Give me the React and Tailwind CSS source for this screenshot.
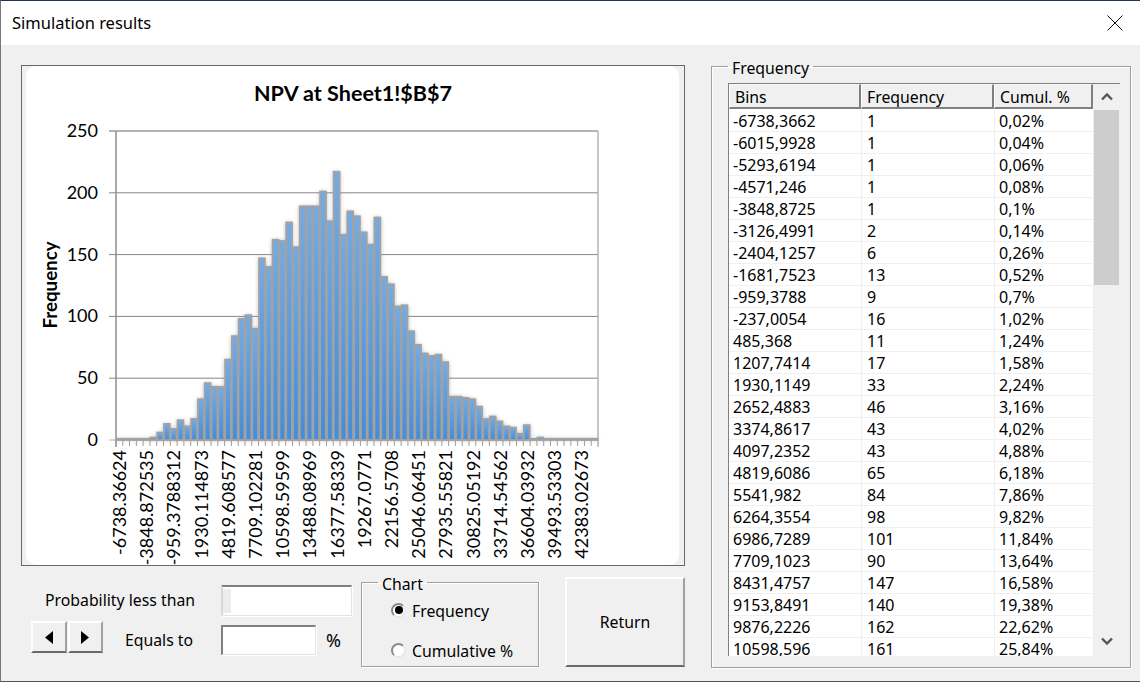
const freq = [1,1,1,1,1,2,6,13,9,16,11,17,33,46,43,43,65,84,98,101,90,147,140,162,161,176,156,189,189,189,201,177,217,166,185,181,168,158,180,132,126,108,109,88,77,70,68,69,63,35,35,34,33,27,17,19,15,11,10,5,12,1,2,1,1,1,1,1,1,1,1];
const rows = [
  ["-6738,3662","1","0,02%"],["-6015,9928","1","0,04%"],["-5293,6194","1","0,06%"],["-4571,246","1","0,08%"],
  ["-3848,8725","1","0,1%"],["-3126,4991","2","0,14%"],["-2404,1257","6","0,26%"],["-1681,7523","13","0,52%"],
  ["-959,3788","9","0,7%"],["-237,0054","16","1,02%"],["485,368","11","1,24%"],["1207,7414","17","1,58%"],
  ["1930,1149","33","2,24%"],["2652,4883","46","3,16%"],["3374,8617","43","4,02%"],["4097,2352","43","4,88%"],
  ["4819,6086","65","6,18%"],["5541,982","84","7,86%"],["6264,3554","98","9,82%"],["6986,7289","101","11,84%"],
  ["7709,1023","90","13,64%"],["8431,4757","147","16,58%"],["9153,8491","140","19,38%"],["9876,2226","162","22,62%"],
  ["10598,596","161","25,84%"],
];
const xLabels = ["-6738.36624","-3848.872535","-959.3788312","1930.114873","4819.608577","7709.102281","10598.59599","13488.08969","16377.58339","19267.0771","22156.5708","25046.06451","27935.55821","30825.05192","33714.54562","36604.03932","39493.53303","42383.02673"];
const PX = 90, PY = 65, PW = 482, PH = 309;
const step = PW / freq.length;

function Chart() {
  const yOf = (v) => PY + PH - (v / 250) * PH;
  return (
    <svg width="653" height="499" className="block">
      <defs>
        <linearGradient id="bar" x1="0" y1="0" x2="0" y2="1">
          <stop offset="0" stopColor="#72ace6" />
          <stop offset="1" stopColor="#468cd6" />
        </linearGradient>
        <filter id="soft" x="-5%" y="-5%" width="110%" height="110%">
          <feGaussianBlur stdDeviation="2.2" />
        </filter>
      </defs>
      <text x="327" y="35" textAnchor="middle" className="fill-black text-[21px] font-bold font-['Lato']" textLength="198" lengthAdjust="spacingAndGlyphs">NPV at Sheet1!$B$7</text>
      <text transform="translate(31 219) rotate(-90)" textAnchor="middle" className="fill-black text-[18px] font-bold font-['Lato']" textLength="87" lengthAdjust="spacingAndGlyphs">Frequency</text>
      {[0,50,100,150,200,250].map((v) => (
        <g key={v}>
          <line x1={PX - 7} x2={PX + PW} y1={yOf(v)} y2={yOf(v)} stroke={v === 250 || v === 0 ? "#b4b4b4" : "#868686"} strokeWidth={v === 250 ? 2 : 1} />
          <text x={PX - 18} y={yOf(v) + 6} textAnchor="end" className="fill-black text-[18px] font-['Lato']">{v}</text>
        </g>
      ))}
      <line x1={PX} x2={PX} y1={PY} y2={PY + PH + 7} stroke="#8e8e8e" strokeWidth="1.5" />
      <line x1={PX + PW} x2={PX + PW} y1={PY} y2={PY + PH + 7} stroke="#b4b4b4" strokeWidth="1.5" />
      {freq.map((_, i) => (
        <line key={i} x1={PX + step * i} x2={PX + step * i} y1={PY + PH} y2={PY + PH + 6} stroke="#a0a0a0" />
      ))}
      <g filter="url(#soft)" opacity="0.7">
        {freq.map((v, i) => (
          <rect key={i} x={PX + step * i} y={yOf(v)} width={step} height={PY + PH - yOf(v)} fill="#8a8a8a" />
        ))}
      </g>
      {freq.map((v, i) => (
        <rect key={i} x={PX + step * i + 0.5} y={yOf(v)} width={step - 1} height={PY + PH - yOf(v)} fill="url(#bar)" stroke="#a2a2a2" strokeWidth="1.8" />
      ))}
      {xLabels.map((l, i) => {
        const x = PX + 10 + i * 27.2;
        return (
          <text key={l} transform={`translate(${x} 384) rotate(-90)`} textAnchor="end" className="fill-black text-[18px] font-['Lato']">{l}</text>
        );
      })}
    </svg>
  );
}

const etched = "border border-[#a0a0a0] shadow-[1px_1px_0_#fff,inset_1px_1px_0_#fff]";
const raised = "border-2 border-t-white border-l-white border-b-[#696969] border-r-[#a0a0a0]";

function Radio({ checked, label, className }) {
  return (
    <div className={`flex h-[20px] items-center gap-[6px] ${className}`}>
      <span className="flex h-[15px] w-[15px] items-center justify-center rounded-full border-2 border-t-[#8a8a8a] border-l-[#8a8a8a] border-b-[#e8e8e8] border-r-[#e8e8e8] bg-white">
        {checked && <span className="h-[8px] w-[8px] rounded-full bg-black" />}
      </span>
      <span className="pt-[2px]">{label}</span>
    </div>
  );
}

function Spin({ dir, className }) {
  return (
    <button className={`flex h-[32px] items-center justify-center bg-[#f0f0f0] ${raised} ${className}`}>
      <svg width="9" height="13" viewBox="0 0 9 13">
        <path d={dir === "l" ? "M8 0V13L0 6.5Z" : "M0 0V13L8 6.5Z"} fill="#000" />
      </svg>
    </button>
  );
}

export default function App() {
  return (
    <div className="flex h-[682px] w-[1140px] flex-col overflow-hidden border-t border-l border-b border-t-[#1f3550] border-l-[#777777] border-b-[#555555] bg-[#f0f0f0] font-['Noto_Sans',sans-serif] text-[15.8px] leading-[20px] text-black">
      <header className="flex h-[44px] shrink-0 items-center justify-between bg-white pl-[11px] pr-[17px]">
        <span className="text-[16.5px]">Simulation results</span>
        <svg width="16" height="16" viewBox="0 0 16 16">
          <path d="M0.5 0.5L15.5 15.5M15.5 0.5L0.5 15.5" stroke="#111" strokeWidth="1" fill="none" />
        </svg>
      </header>
      <main className="flex flex-1 pl-[20px] pt-[20px]">
        <div className="flex w-[664px] flex-col">
          <div className="h-[501px] border border-[#696969] bg-[#f0f0f0] pl-[4px] pr-[5px]">
            <div className="h-full rounded-[10px] bg-white">
              <Chart />
            </div>
          </div>
          <div className="flex items-start pt-[11px]">
            <div className="flex w-[340px] flex-col">
              <div className="mt-[8px] flex h-[31px] items-center">
                <span className="ml-[24px] w-[176px] pb-[2px]">Probability less than</span>
                <div className="relative h-[31px] w-[131px] border-t-2 border-l-2 border-b border-r border-t-[#808080] border-l-[#d8d8d8] border-b-[#e3e3e3] border-r-[#e3e3e3] bg-white shadow-[1px_1px_0_#fff]">
                  <div className="absolute left-0 top-[2px] h-[24px] w-[8px] bg-[#ececec]" />
                </div>
              </div>
              <div className="mt-[9px] flex h-[30px] items-start">
                <div className="ml-[10px] -mt-[4px] flex gap-px">
                  <Spin dir="l" className="w-[36px]" />
                  <Spin dir="r" className="w-[35px]" />
                </div>
                <span className="ml-[22px] w-[96px] leading-[30px]">Equals to</span>
                <div className="h-[30px] w-[95px] border-t-2 border-l-2 border-b border-r border-t-[#808080] border-l-[#808080] border-b-[#e3e3e3] border-r-[#e3e3e3] bg-white shadow-[1px_1px_0_#fff]" />
                <span className="ml-[10px] text-[18px] leading-[30px]">%</span>
              </div>
            </div>
            <fieldset className={`-mt-[3px] h-[93px] w-[178px] ${etched}`}>
              <legend className="ml-[16px] px-[4px] leading-[16px]"><span className="relative top-[2px]">Chart</span></legend>
              <Radio checked label="Frequency" className="ml-[29px] mt-[10px]" />
              <Radio label="Cumulative %" className="ml-[29px] mt-[20px]" />
            </fieldset>
            <button className={`ml-[26px] h-[90px] w-[120px] bg-[#f0f0f0] ${raised}`}>Return</button>
          </div>
        </div>
        <fieldset className={`ml-[26px] -mt-[7px] h-[610px] w-[420px] ${etched} pl-[16px] pt-[8px]`}>
          <legend className="px-[4px] leading-[17px]"><span className="relative top-[2px]">Frequency</span></legend>
          <div className="flex h-[573px] w-[392px] overflow-hidden border-t border-l border-t-[#808080] border-l-[#808080] bg-white">
            <div className="w-[364px] text-[16px] leading-[21px]">
              <div className="mb-px flex h-[25px] bg-[#f0f0f0] text-[15.8px]">
                {[["Bins","w-[132px]"],["Frequency","w-[133px]"],["Cumul. %","w-[99px]"]].map(([h,w]) => (
                  <div key={h} className={`${w} border-t border-l border-r-2 border-b-2 border-t-[#f8f8f8] border-l-white border-r-[#808080] border-b-[#808080] pl-[5px] pt-[2px]`}>{h}</div>
                ))}
              </div>
              {rows.map((r) => (
                <div key={r[0]} className="flex h-[22px] border-b border-b-[#f0f0f0] pt-px">
                  <div className="-mt-px w-[133px] border-r border-r-[#f0f0f0] pl-[4px] pt-px">{r[0]}</div>
                  <div className="-mt-px w-[133px] border-r border-r-[#f0f0f0] pl-[5px] pt-px">{r[1]}</div>
                  <div className="pl-[4px]">{r[2]}</div>
                </div>
              ))}
            </div>
            <div className="flex w-[27px] flex-col bg-[#f0f0f0]">
              <div className="flex h-[26px] items-center justify-center">
                <svg width="12" height="8" viewBox="0 0 12 8"><path d="M1 6.5L6 1.5L11 6.5" stroke="#555" strokeWidth="2.4" fill="none" /></svg>
              </div>
              <div className="mx-px h-[175px] bg-[#cdcdcd]" />
              <div className="flex flex-1 items-end justify-center pb-[11px]">
                <svg width="12" height="8" viewBox="0 0 12 8"><path d="M1 1.5L6 6.5L11 1.5" stroke="#555" strokeWidth="2.4" fill="none" /></svg>
              </div>
            </div>
          </div>
        </fieldset>
      </main>
    </div>
  );
}
